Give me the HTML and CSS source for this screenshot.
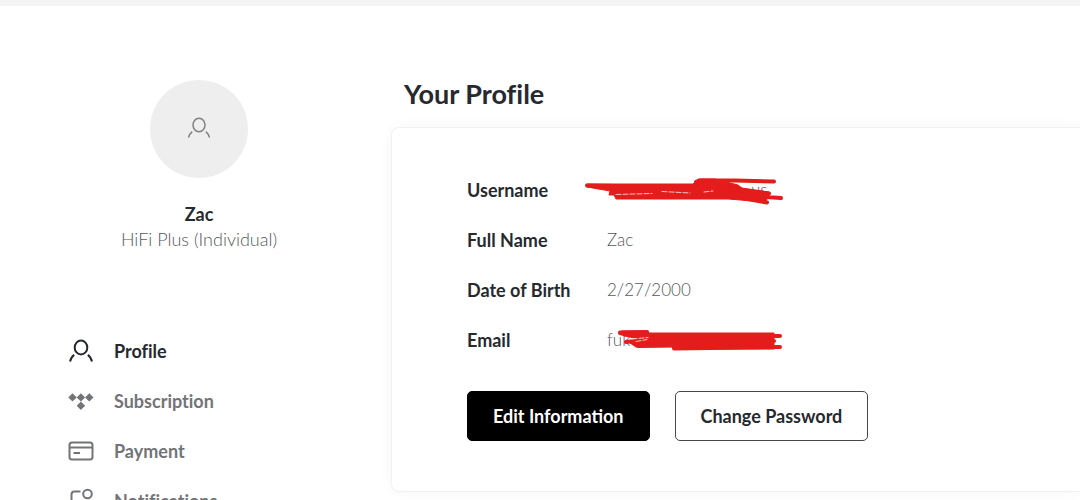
FILE: index.html
```html
<!DOCTYPE html>
<html lang="en">
<head>
    <meta charset="UTF-8">
    <meta name="viewport" content="width=device-width, initial-scale=1.0">
    <title>Your Profile</title>
    <link rel="stylesheet" href="styles.css">
</head>
<body>
    <div class="topbar"></div>
    <div class="layout">
        <aside class="sidebar">
            <div class="user">
                <div class="avatar">
                    <svg width="26" height="26" viewBox="0 0 26 26" fill="none" stroke="currentColor" stroke-width="1.5">
                        <ellipse cx="13" cy="9" rx="6" ry="6.700"/>
                        <path d="M2.500 21.500c.8-2.600 1.900-4.300 3.700-5.800M23.500 21.500c-.8-2.600-1.900-4.300-3.700-5.800"/>
                    </svg>
                </div>
                <div class="user-name">Zac</div>
                <div class="user-plan">HiFi Plus (Individual)</div>
            </div>
            <nav class="menu">
                <a href="#profile" class="active">
                    <svg width="26" height="26" viewBox="0 0 26 26" fill="none" stroke="currentColor" stroke-width="2">
                        <ellipse cx="13" cy="9.500" rx="6.300" ry="7"/>
                        <path d="M2 23.500c.8-3.200 2-5.200 4.200-6.700M24 23.500c-.8-3.200-2-5.200-4.200-6.700"/>
                    </svg>
                    Profile
                </a>
                <a href="#subscription">
                    <svg width="26" height="26" viewBox="0 0 26 26" fill="currentColor">
                        <path d="M4.500 5.200l4.200 4.200-4.200 4.200L.3 9.400zM12.900 5.200l4.200 4.200-4.200 4.200-4.200-4.200zM21.300 5.200l4.200 4.200-4.200 4.200-4.200-4.200zM12.900 13.600l4.200 4.200-4.200 4.200-4.200-4.200z"/>
                    </svg>
                    Subscription
                </a>
                <a href="#payment">
                    <svg width="26" height="26" viewBox="0 0 26 26" fill="none" stroke="currentColor" stroke-width="2">
                        <rect x="1.500" y="4.500" width="23" height="17" rx="2.500"/>
                        <path d="M2 9.500h22M5.500 15h6.500"/>
                    </svg>
                    Payment
                </a>
                <a href="#notifications">
                    <svg width="26" height="26" viewBox="0 0 26 26" fill="none" stroke="currentColor" stroke-width="2">
                        <circle cx="19.500" cy="6" r="4.300"/>
                        <path d="M12.500 3.500H6.500a3 3 0 0 0-3 3v13a3 3 0 0 0 3 3h13a3 3 0 0 0 3-3V14"/>
                    </svg>
                    Notifications
                </a>
            </nav>
        </aside>
        <main class="content">
            <h1>Your Profile</h1>
            <section class="card">
                <dl class="details">
                    <dt>Username</dt>
                    <dd class="username">
                        us
                        <svg class="scribble" width="230" height="50" viewBox="0 0 230 50">
                            <path class="fill" d="M17 19H123L128 14H145L168 20L172 23L199 27L196 37L158 34H46L44 30H39L40 26L17 22z"/>
                            <path d="M17 20.500L46 21M48 32L160 31M126 17L131 15.500L165 15.500L204 16.500M150 23L199 28.500M160 31L197 37.500M155 29L211 33"/>
                            <path class="gap" d="M46 29.500l36-1M92 26.500l28 1.500M134 27l9-1"/>
                        </svg>
                    </dd>
                    <dt>Full Name</dt>
                    <dd>Zac</dd>
                    <dt>Date of Birth</dt>
                    <dd>2/27/2000</dd>
                    <dt>Email</dt>
                    <dd>
                        fuk
                        <svg class="scribble" width="230" height="50" viewBox="0 0 230 50">
                            <path class="fill" d="M52 16H78L79 18H204V34H104L102 32H66L60 28L70 22L54 21z"/>
                            <path d="M50 17.500L77 17M50 18L62 21L86 23M56 27L90 23M68 31L110 30M104 33.500L210 32M180 21L210 21M190 26L204 26"/>
                            <path class="gap" d="M62 24l16-1.500M66 26.500l11-2"/>
                        </svg>
                    </dd>
                </dl>
                <div class="actions">
                    <button type="button" class="primary">Edit Information</button>
                    <button type="button">Change Password</button>
                </div>
            </section>
        </main>
    </div>
</body>
</html>
```
FILE: styles.css
```css
* {
    box-sizing: border-box;
}

body {
    font-family: Lato, sans-serif;
    font-size: 18px;
    line-height: 25px;
    font-variant-ligatures: none;
    color: #26292f;
    background-color: #fff;
    margin: 0;
    height: 100vh;
    overflow: hidden;
}

.topbar {
    height: 6px;
    background-color: #f4f4f4;
}

.layout {
    display: grid;
    grid-template-columns: 262px 1fr;
    column-gap: 61px;
    padding: 70px 0 0 68px;
}

.user {
    display: flex;
    flex-direction: column;
    align-items: center;
    padding-top: 4px;
}

.avatar {
    display: flex;
    align-items: center;
    justify-content: center;
    width: 98px;
    height: 98px;
    margin-bottom: 24px;
    border-radius: 50%;
    background-color: #eee;
    color: #808286;
}

.user-name {
    font-weight: 700;
}

.user-plan {
    font-weight: 300;
    color: #55585d;
}

.menu {
    display: flex;
    flex-direction: column;
    margin-top: 74px;
}

.menu a {
    display: flex;
    align-items: center;
    gap: 20px;
    height: 50px;
    font-weight: 700;
    color: #727477;
    text-decoration: none;
}

.menu a.active {
    color: #26292f;
}

h1 {
    margin: 0 0 15px;
    padding-left: 13px;
    font-size: 27px;
    line-height: 36px;
    font-weight: 700;
}

.card {
    padding: 37px 0 50px 75px;
    border: 1px solid #f1f1f1;
    border-right: 0;
    border-radius: 8px 0 0 8px;
    box-shadow: 0 0 14px rgba(0, 0, 0, 0.04);
}

.details {
    display: grid;
    grid-template-columns: 140px 1fr;
    margin: 0 0 26px;
    line-height: 50px;
}

.details dt {
    font-weight: 700;
}

.details dd {
    position: relative;
    margin: 0;
    font-size: 17px;
    font-weight: 300;
    color: #55585d;
}

.details .username {
    padding-left: 144px;
}

/* pen marks drawn over the private values */
.scribble {
    position: absolute;
    left: -37px;
    top: 0;
    fill: none;
    stroke: #e51c1c;
    stroke-width: 4;
    stroke-linecap: round;
    stroke-linejoin: round;
}

.scribble .fill {
    fill: #e51c1c;
    stroke-width: 1;
}

.scribble .gap {
    stroke: #f6c4c4;
    stroke-width: 1;
    stroke-dasharray: 5 2;
}

.actions {
    display: flex;
    gap: 25px;
}

.actions button {
    height: 50px;
    padding: 0 25px;
    border: 1px solid #44474c;
    border-radius: 5px;
    background-color: #fff;
    color: #26292f;
    font-family: inherit;
    font-size: 18px;
    font-weight: 700;
    cursor: pointer;
}

.actions .primary {
    border-color: #000;
    background-color: #000;
    color: #fff;
}
```
